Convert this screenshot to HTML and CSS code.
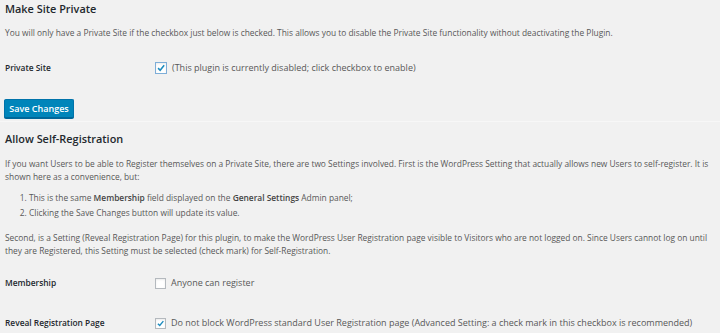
FILE: index.html
```html
<!DOCTYPE html>
<html>
<head>
<meta charset="utf-8">
<link rel="stylesheet" href="styles.css">
</head>
<body>
<div class="wrap">
  <h2 class="title t1">Make Site Private</h2>
  <p class="desc p1">You will only have a Private Site if the checkbox just below is checked. This allows you to disable the Private Site functionality without deactivating the Plugin.</p>
  <div class="row r1">
    <div class="label">Private Site</div>
    <label class="field"><span class="cb cb-focus"><svg viewBox="0 0 12 12" width="12" height="12"><path d="M2.5 6.2 L5 8.7 L9.8 2.8" fill="none" stroke="#1e8cbe" stroke-width="1.9"/></svg></span>(This plugin is currently disabled; click checkbox to enable)</label>
  </div>
  <div class="actions"><button class="btn">Save Changes</button></div>
  <div class="divider"></div>
  <h2 class="title t2">Allow Self-Registration</h2>
  <p class="desc p2">If you want Users to be able to Register themselves on a Private Site, there are two Settings involved. First is the WordPress Setting that actually allows new Users to self-register. It is<br>shown here as a convenience, but:</p>
  <ol class="list">
    <li>This is the same <b>Membership</b> field displayed on the <b>General Settings</b> Admin panel;</li>
    <li>Clicking the Save Changes button will update its value.</li>
  </ol>
  <p class="desc p3">Second, is a Setting (Reveal Registration Page) for this plugin, to make the WordPress User Registration page visible to Visitors who are not logged on. Since Users cannot log on until<br>they are Registered, this Setting must be selected (check mark) for Self-Registration.</p>
  <div class="row r2">
    <div class="label">Membership</div>
    <label class="field"><span class="cb"></span>Anyone can register</label>
  </div>
  <div class="row r3">
    <div class="label">Reveal Registration Page</div>
    <label class="field"><span class="cb"><svg viewBox="0 0 12 12" width="11" height="11"><path d="M2.5 6.2 L5 8.7 L9.8 2.8" fill="none" stroke="#1e8cbe" stroke-width="1.9"/></svg></span>Do not block WordPress standard User Registration page (Advanced Setting: a check mark in this checkbox is recommended)</label>
  </div>
</div>
</body>
</html>
```
FILE: styles.css
```css
html, body {
  margin: 0;
  padding: 0;
  background: #f1f1f1;
}
body {
  font-family: "Open Sans", "Noto Sans", sans-serif;
  font-size: 8.4px;
  color: #585858;
  width: 720px;
  height: 333px;
  overflow: hidden;
}
.wrap {
  padding: 0 5px;
}
.title {
  margin: 0;
  font-size: 10.9px;
  font-weight: 600;
  line-height: 16px;
  color: #23282d;
}
.t1 {
  padding-top: 1px;
}
.desc {
  margin: 0;
  line-height: 13px;
  white-space: nowrap;
}
.p1 {
  margin-top: 9px;
}
.row {
  display: grid;
  grid-template-columns: 150px 1fr;
  align-items: center;
  line-height: 14px;
}
.label {
  font-weight: 600;
  color: #23282d;
}
.field {
  display: flex;
  align-items: center;
  gap: 5px;
  white-space: nowrap;
  font-size: 9px;
}
.cb {
  box-sizing: border-box;
  width: 11px;
  height: 11px;
  background: #fff;
  border: 1px solid #b4b9be;
  display: flex;
  align-items: center;
  justify-content: center;
  flex: none;
  box-shadow: inset 0 1px 2px rgba(0,0,0,0.08);
}
.cb svg {
  display: block;
}
.cb-focus {
  width: 12px;
  height: 12px;
  border-color: #7eaed8;
}
.r1 {
  margin-top: 22px;
}
.actions {
  margin-top: 24px;
}
.btn {
  display: block;
  margin-left: -1px;
  width: 70px;
  height: 19px;
  padding: 0;
  background: #0085ba;
  border: 1px solid #0073aa;
  border-bottom-color: #006799;
  border-radius: 2px;
  color: #fff;
  font-family: inherit;
  font-size: 9px;
  font-weight: 600;
  box-shadow: 0 1px 0 #006799;
}
.divider {
  margin: 3px -5px 0;
  border-top: 1px solid #f7f7f7;
}
.t2 {
  margin-top: 9px;
}
.p2 {
  margin-top: 10px;
}
.list {
  margin: 8px 0 0;
  padding-left: 24px;
  line-height: 13px;
}
.list li {
  margin-bottom: 2px;
}
.list b {
  font-weight: 600;
  color: #444;
}
.p3 {
  margin-top: 12px;
}
.r2 {
  margin-top: 19px;
}
.r3 {
  margin-top: 26px;
}
```
